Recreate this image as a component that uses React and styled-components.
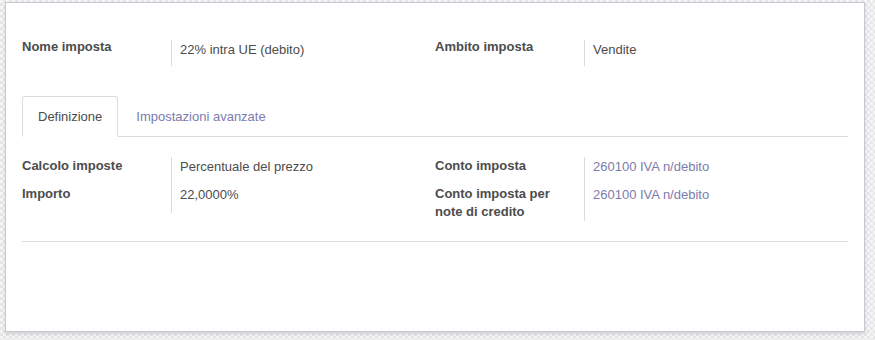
import styled, { createGlobalStyle } from "styled-components";

const GlobalStyle = createGlobalStyle`
  html, body {
    margin: 0;
    height: 100%;
  }
  body {
    background: repeating-conic-gradient(#e6e6e6 0 25%, #f5f5f5 0 50%) 0 0 / 6px 6px;
    font-family: "Liberation Sans", Arial, Helvetica, sans-serif;
    font-size: 13px;
    color: #4c4c4c;
  }
`;

const headerFields = [
  [{ label: "Nome imposta", value: "22% intra UE (debito)" }],
  [{ label: "Ambito imposta", value: "Vendite" }],
];

const tabFields = [
  [
    { label: "Calcolo imposte", value: "Percentuale del prezzo" },
    { label: "Importo", value: "22,0000%" },
  ],
  [
    { label: "Conto imposta", value: "260100 IVA n/debito", link: true },
    {
      label: "Conto imposta per note di credito",
      value: "260100 IVA n/debito",
      link: true,
    },
  ],
];

const Field = ({ field, header }) => (
  <FieldRow>
    <Label $header={header}>{field.label}</Label>
    <Value $header={header} $link={field.link}>
      {field.value}
    </Value>
  </FieldRow>
);

const App = () => {
  return (
    <>
      <GlobalStyle />
      <Page>
        <Sheet>
          <Group>
            {headerFields.map((col, i) => (
              <InnerGroup key={i}>
                {col.map((f) => (
                  <Field key={f.label} field={f} header />
                ))}
              </InnerGroup>
            ))}
          </Group>
          <Notebook>
            <Tabs>
              <Tab $active>Definizione</Tab>
              <Tab>Impostazioni avanzate</Tab>
            </Tabs>
            <TabPane>
              <Group>
                {tabFields.map((col, i) => (
                  <InnerGroup key={i}>
                    {col.map((f) => (
                      <Field key={f.label} field={f} />
                    ))}
                  </InnerGroup>
                ))}
              </Group>
            </TabPane>
          </Notebook>
          <Divider />
        </Sheet>
      </Page>
    </>
  );
};
export default App;

const Page = styled.div`
  padding: 2px 0 0 5px;
`;
const Sheet = styled.div`
  box-sizing: border-box;
  width: 860px;
  height: 330px;
  padding: 37px 16px 0;
  background: #fff;
  border: 1px solid #c8c7d4;
  box-shadow: 0 2px 3px rgba(0, 0, 0, 0.12);
`;
const Group = styled.div`
  display: grid;
  grid-template-columns: 1fr 1fr;
`;
const InnerGroup = styled.div`
  display: flex;
  flex-direction: column;
`;
const FieldRow = styled.div`
  display: grid;
  grid-template-columns: 149px 1fr;
  line-height: 18px;
`;
const Label = styled.div`
  font-weight: bold;
  padding-right: 8px;
  margin-top: ${(p) => (p.$header ? "-2px" : "0")};
`;
const Value = styled.div`
  box-sizing: border-box;
  border-left: 1px solid #dcdcdc;
  padding: 1px 0 0 8px;
  min-height: ${(p) => (p.$header ? "26px" : "28px")};
  color: ${(p) => (p.$link ? "#7c7bad" : "#4c4c4c")};
`;
const Notebook = styled.div`
  margin-top: 30px;
`;
const Tabs = styled.div`
  display: flex;
  border-bottom: 1px solid #dcdcdc;
`;
const Tab = styled.div`
  padding: 11px 15px 10px;
  margin-right: 2px;
  margin-bottom: -1px;
  line-height: 18px;
  border: 1px solid ${(p) => (p.$active ? "#dcdcdc" : "transparent")};
  border-bottom-color: ${(p) => (p.$active ? "#fff" : "transparent")};
  border-radius: 3px 3px 0 0;
  background: ${(p) => (p.$active ? "#fff" : "transparent")};
  color: ${(p) => (p.$active ? "#4c4c4c" : "#7c7bad")};
  cursor: pointer;
`;
const TabPane = styled.div`
  padding-top: 20px;
`;
const Divider = styled.div`
  margin-top: 20px;
  border-top: 1px solid #dcdcdc;
`;
